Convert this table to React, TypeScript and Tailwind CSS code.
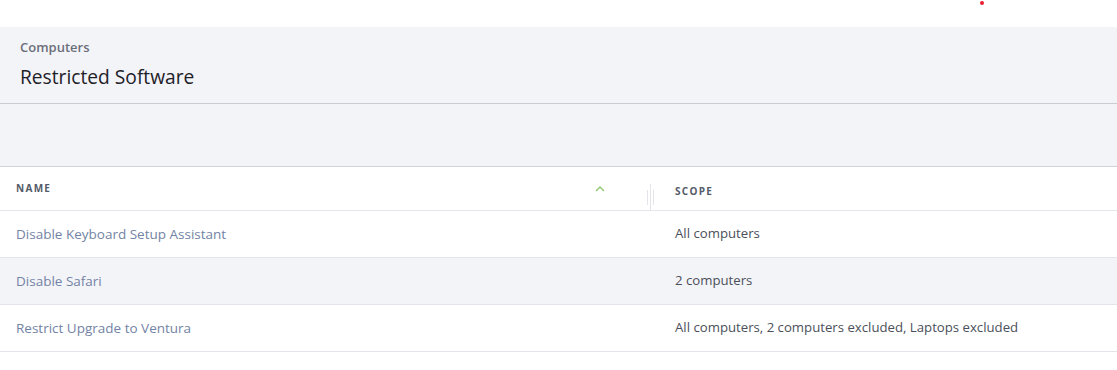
import React from "react";

const rows = [
  { name: "Disable Keyboard Setup Assistant", scope: "All computers" },
  { name: "Disable Safari", scope: "2 computers" },
  { name: "Restrict Upgrade to Ventura", scope: "All computers, 2 computers excluded, Laptops excluded" },
];

export default function App() {
  return (
    <div className="w-[1117px] h-[370px] bg-white overflow-hidden" style={{ fontFamily: "'Open Sans', Lato, sans-serif" }}>
      <div className="h-[27px] relative">
        <span className="absolute left-[980px] top-[1px] w-[4px] h-[4px] rounded-full bg-[#e8202f]" />
      </div>
      <div className="h-[77px] bg-[#f3f4f8] border-b border-[#c9ccd3] px-5 pt-[12px]">
        <div className="text-[13px] font-semibold text-[#6b6f7a] leading-[17px]">Computers</div>
        <div className="text-[19.2px] text-[#1e2128] leading-[24px] mt-[9px]">Restricted Software</div>
      </div>
      <div className="h-[63px] bg-[#f3f4f8] border-b border-[#cfd2d9]" />
      <div className="flex h-[44px] border-b border-[#e3e5ea] items-center">
        <div className="w-[651px] flex items-center pl-4 pr-[46px] relative h-full">
          <span className="text-[10px] font-bold tracking-[0.13em] text-[#545a68]">NAME</span>
          <svg className="ml-auto" width="10" height="6" viewBox="0 0 10 6">
            <path d="M1 5 L5 1 L9 5" fill="none" stroke="#8cc56a" strokeWidth="1.3" />
          </svg>
          <span className="absolute right-[3px] top-[23px] w-px h-[15px] bg-[#e3e5ea]" />
          <span className="absolute right-0 top-[17px] w-px h-[27px] bg-[#e3e5ea]" />
          <span className="absolute right-[-3px] top-[23px] w-px h-[15px] bg-[#e3e5ea]" />
        </div>
        <div className="flex-1 pl-6">
          <span className="text-[10px] font-bold tracking-[0.13em] text-[#545a68]">SCOPE</span>
        </div>
      </div>
      {rows.map((r, i) => (
        <div key={i} className={`flex h-[47px] items-center border-b border-[#e3e5ea] ${i === 1 ? "bg-[#f3f4f8]" : "bg-white"}`}>
          <div className="w-[651px] pl-4 text-[13.5px] font-medium text-[#7383a5]">{r.name}</div>
          <div className="flex-1 pl-6 text-[13.2px] text-[#4b4f5a]">{r.scope}</div>
        </div>
      ))}
    </div>
  );
}
